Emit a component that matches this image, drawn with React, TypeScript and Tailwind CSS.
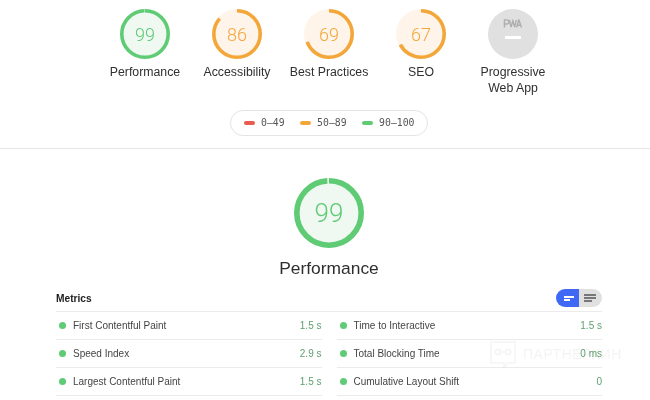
const base = "font-['Liberation_Sans',Arial,sans-serif]";

function Gauge({ score, tone, size, stroke }: { score: number; tone: "green" | "orange"; size: number; stroke: number }) {
  const color = tone === "green" ? "#5fcb75" : "#f3a73b";
  const fill = tone === "green" ? "#eff9f2" : "#fef4ea";
  const r = (size - stroke) / 2;
  const c = 2 * Math.PI * r;
  const textClass = tone === "green" ? "text-[#5fcb75]" : "text-[#f3a73b]";
  return (
    <div className="relative shrink-0" style={{ width: size, height: size }}>
      <svg width={size} height={size} viewBox={`0 0 ${size} ${size}`} className="block -rotate-90">
        <circle cx={size / 2} cy={size / 2} r={size / 2} fill={fill} />
        <circle
          cx={size / 2}
          cy={size / 2}
          r={r}
          fill="none"
          stroke={color}
          strokeWidth={stroke}
          strokeDasharray={`${(c * score) / 100} ${c}`}
        />
      </svg>
      <div
        className={`absolute inset-0 flex items-center justify-center font-['Roboto',sans-serif] font-light ${textClass} ${
          size > 60 ? "text-[26px]" : "text-[18px]"
        }`}
      >
        {score}
      </div>
    </div>
  );
}

function Category({ score, tone, label }: { score: number; tone: "green" | "orange"; label: string }) {
  return (
    <div className="flex w-[92px] flex-col items-center">
      <Gauge score={score} tone={tone} size={50} stroke={3.6} />
      <div className="mt-[5px] whitespace-nowrap text-[12.3px] leading-[16px] text-[#303030]">{label}</div>
    </div>
  );
}

function Pwa() {
  return (
    <div className="flex w-[92px] flex-col items-center">
      <div className="flex h-[50px] w-[50px] flex-col items-center rounded-full bg-[#e0e0e0]">
        <svg width="20" height="9" viewBox="0 0 21 10" className="mt-[10px]" fill="none" stroke="#aeaeae" strokeWidth="1.6">
          <path d="M1 9.5V1h2.6a2 2 0 0 1 0 4.6H1" />
          <path d="M6.5 1l1.8 8 2-7 2 7 1.8-8" />
          <path d="M14.5 9.5L17 1l3 8.5M15.6 7h3.6" />
        </svg>
        <div className="mt-[8px] h-[3px] w-[16px] bg-white" />
      </div>
      <div className="mt-[5px] text-center text-[12.3px] leading-[16px] text-[#303030]">
        Progressive
        <br />
        Web App
      </div>
    </div>
  );
}

function LegendItem({ color, label }: { color: string; label: string }) {
  return (
    <div className="flex items-center gap-[6.5px]">
      <span className={`h-[3.5px] w-[11px] rounded-full ${color}`} />
      <span className="font-['DejaVu_Sans_Mono',monospace] text-[9.8px] text-[#555]">{label}</span>
    </div>
  );
}

function Metric({ label, value }: { label: string; value: string }) {
  return (
    <div className="flex h-[28px] items-center border-b border-[#ebebeb] pl-[3px] text-[10px]">
      <span className="h-[7px] w-[7px] rounded-full bg-[#5fcb75]" />
      <span className="ml-[7px] flex-1 text-[#444]">{label}</span>
      <span className="text-[#5f9e6e]">{value}</span>
    </div>
  );
}

export default function App() {
  return (
    <div className={`relative h-[400px] w-[650px] overflow-hidden bg-white blur-[0.3px] ${base}`}>
      <div className="flex justify-center pl-[8px] pt-[9px]">
        <Category score={99} tone="green" label="Performance" />
        <Category score={86} tone="orange" label="Accessibility" />
        <Category score={69} tone="orange" label="Best Practices" />
        <Category score={67} tone="orange" label="SEO" />
        <Pwa />
      </div>
      <div className="mt-[14px] flex justify-center pl-[8px]">
        <div className="flex h-[26px] w-[198px] items-center justify-center gap-[15px] rounded-[13px] border border-[#e4e4e4]">
          <LegendItem color="bg-[#ea5b4f]" label="0–49" />
          <LegendItem color="bg-[#f3a73b]" label="50–89" />
          <LegendItem color="bg-[#5fcb75]" label="90–100" />
        </div>
      </div>
      <div className="mt-[12px] border-t border-[#e6e6e6]" />
      <div className="mt-[29px] flex flex-col items-center pl-[8px]">
        <Gauge score={99} tone="green" size={70} stroke={5.6} />
        <div className="mt-[8px] text-[17.4px] leading-[24px] text-[#2e2e2e]">Performance</div>
      </div>
      <div className="ml-[56px] mr-[48px] mt-[9px]">
        <div className="flex h-[23px] items-center justify-between border-b border-[#ebebeb] pb-[4px]">
          <span className="relative top-[1px] text-[10.2px] font-bold text-[#222]">Metrics</span>
          <div className="flex h-[18px] w-[46px] overflow-hidden rounded-full">
            <div className="flex w-[23px] flex-col items-start justify-center gap-[1px] bg-[#3f68f5] pl-[8px]">
              <span className="h-[2px] w-[10px] bg-white" />
              <span className="h-[2px] w-[6px] bg-white" />
            </div>
            <div className="flex flex-1 flex-col items-start justify-center gap-[1.5px] bg-[#e0e0e0] pl-[5px]">
              <span className="h-[1.5px] w-[12px] bg-[#777]" />
              <span className="h-[1.5px] w-[12px] bg-[#777]" />
              <span className="h-[1.5px] w-[8px] bg-[#777]" />
            </div>
          </div>
        </div>
        <div className="grid grid-cols-2 gap-x-[15px]">
          <div>
            <Metric label="First Contentful Paint" value="1.5 s" />
            <Metric label="Speed Index" value="2.9 s" />
            <Metric label="Largest Contentful Paint" value="1.5 s" />
          </div>
          <div>
            <Metric label="Time to Interactive" value="1.5 s" />
            <Metric label="Total Blocking Time" value="0 ms" />
            <Metric label="Cumulative Layout Shift" value="0" />
          </div>
        </div>
      </div>
      <div className="absolute left-[490px] top-[340px] flex items-center gap-[7px] opacity-[0.05]">
        <svg width="26" height="28" viewBox="0 0 26 28" fill="none" stroke="#333" strokeWidth="1.5">
          <path d="M1 2h24v21h-7l-4 4v-4H1z" />
          <circle cx="8" cy="12" r="2.5" />
          <circle cx="18" cy="12" r="2.5" />
          <path d="M10.5 12h5" />
        </svg>
        <span className="text-[14px] tracking-[0.5px] text-[#333]">ПАРТНЕРКИН</span>
      </div>
    </div>
  );
}
